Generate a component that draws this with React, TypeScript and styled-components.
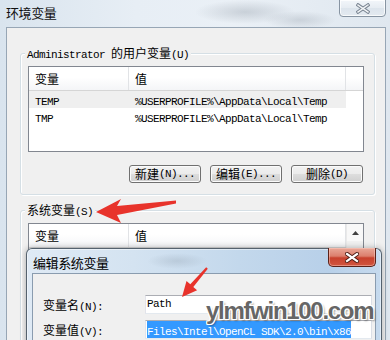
import React from "react";
import styled, { createGlobalStyle } from "styled-components";

const GlobalStyle = createGlobalStyle`
  *, *::before, *::after { box-sizing: border-box; }
  html, body { margin: 0; padding: 0; }
  body {
    width: 390px;
    height: 340px;
    overflow: hidden;
    font-family: "Noto Sans CJK SC", "Noto Sans", sans-serif;
    font-size: 12px;
    color: #000;
    background: #f0f0f0;
  }
`;

const Screen = styled.div`
  position: relative;
  width: 390px;
  height: 340px;
  overflow: hidden;
  display: flex;
  flex-direction: column;
  background:
    radial-gradient(ellipse 50px 12px at 245px 12px, rgba(140, 150, 162, 0.35), transparent),
    radial-gradient(ellipse 36px 9px at 300px 20px, rgba(140, 150, 162, 0.3), transparent),
    linear-gradient(90deg, #d9e4ee 0%, #e7eef5 35%, #eaf0f6 60%, #dfe7ef 100%);
`;

const TitleBar = styled.div`
  height: 27px;
  flex: none;
  display: flex;
  justify-content: space-between;
  align-items: flex-start;
  padding: 0 4px 0 6px;
`;

const WindowTitle = styled.div`
  margin-top: 5px;
  font-size: 13px;
  line-height: 15px;
  letter-spacing: -0.4px;
  color: #111;
`;

const CaptionClose = styled.div`
  width: 47px;
  height: 18px;
  margin-top: -1px;
  border: 1px solid #8794a2;
  border-radius: 0 0 4px 4px;
  background: linear-gradient(#f2f6fa 0%, #e6ecf2 50%, #dce4ec 51%, #e4eaf0 100%);
  box-shadow: inset 0 0 0 1px rgba(255, 255, 255, 0.75);
  display: flex;
  align-items: center;
  justify-content: center;
`;

const Client = styled.div`
  flex: 1;
  margin: 0 4px 0 6px;
  border: 1px solid #97a6b5;
  border-bottom: none;
  background: #f0f0f0;
  padding: 0 10px 0 13px;
  display: flex;
  flex-direction: column;
`;

const Group = styled.div<{ $top: number }>`
  margin-top: ${(p) => p.$top}px;
  flex: none;
  border: 1px solid #d5dfe5;
  border-radius: 3px;
  box-shadow: inset 1px 1px 0 #fff, 1px 1px 0 #fff;
  padding: 0 10px 11px 7px;
  display: flex;
  flex-direction: column;
`;

const Legend = styled.div`
  align-self: flex-start;
  margin: -8px 0 0 -3px;
  padding: 0 2px;
  height: 14px;
  line-height: 14px;
  background: #f0f0f0;
  white-space: nowrap;
`;

const M = styled.span`
  font-family: "Liberation Mono", "DejaVu Sans Mono", monospace;
  font-size: 11px;
  letter-spacing: -0.6px;
`;

const ListView = styled.div<{ $h: number }>`
  margin-top: 6px;
  height: ${(p) => p.$h}px;
  flex: none;
  border: 1px solid #828790;
  background: #fff;
  display: flex;
  overflow: hidden;
`;

const ListMain = styled.div`
  flex: 1;
  display: flex;
  flex-direction: column;
`;

const Header = styled.div`
  height: 24px;
  flex: none;
  display: flex;
  background: linear-gradient(#ffffff 0%, #ffffff 45%, #f4f5f7 100%);
  border-bottom: 1px solid #d5d5d5;
`;

const HeaderCell = styled.div<{ $w: number }>`
  width: ${(p) => p.$w}px;
  flex: none;
  border-right: 1px solid #e1e3e6;
  padding-left: 6px;
  line-height: 24px;
  white-space: nowrap;
`;

const HeaderFill = styled.div`
  flex: 1;
`;

const Row = styled.div<{ $hot?: boolean }>`
  display: flex;
  width: 317px;
  height: 17px;
  line-height: 17px;
  background: ${(p) => (p.$hot ? "#efefef" : "transparent")};
`;

const Cell = styled.div<{ $w: number }>`
  width: ${(p) => p.$w}px;
  flex: none;
  padding-left: 6px;
  white-space: nowrap;
  overflow: hidden;
`;

const ScrollTrack = styled.div`
  width: 17px;
  flex: none;
  background: #f1f1f1;
  border-left: 1px solid #e9e9e9;
  display: flex;
  flex-direction: column;
`;

const ScrollUp = styled.div`
  height: 17px;
  background: #f8f8f8;
  display: flex;
  align-items: center;
  justify-content: center;
`;

const ButtonRow = styled.div`
  margin-top: 13px;
  margin-right: 1px;
  display: flex;
  justify-content: flex-end;
  gap: 9px;
`;

const Button = styled.div`
  width: 72px;
  height: 18px;
  border: 1px solid #707070;
  border-radius: 3px;
  background: linear-gradient(#f2f2f2 0%, #ebebeb 50%, #dddddd 51%, #cfcfcf 100%);
  box-shadow: inset 0 0 0 1px #fbfbfb;
  display: flex;
  align-items: center;
  justify-content: center;
  line-height: 16px;
  white-space: nowrap;
`;

const Dialog = styled.div`
  position: absolute;
  left: 26px;
  top: 248px;
  width: 356px;
  height: 100px;
  border: 1px solid #55626e;
  border-bottom: none;
  border-radius: 6px 6px 0 0;
  background:
    radial-gradient(ellipse 30px 8px at 150px 12px, rgba(150, 165, 180, 0.35), transparent),
    linear-gradient(90deg, #dfeaf5 0%, #d4e3f1 30%, #c3d8ec 60%, #b8d0e9 85%, #c6daee 100%);
  box-shadow: 0 0 6px rgba(0, 0, 0, 0.3), inset 0 0 0 1px rgba(255, 255, 255, 0.45);
  padding: 0 5px;
  display: flex;
  flex-direction: column;
`;

const DialogTitleBar = styled.div`
  height: 24px;
  flex: none;
  display: flex;
  justify-content: space-between;
  align-items: flex-start;
`;

const DialogTitle = styled.div`
  margin: 7px 0 0 1px;
  font-size: 13px;
  line-height: 14px;
  letter-spacing: -0.4px;
`;

const DialogClose = styled.div`
  width: 48px;
  height: 19px;
  margin-top: -1px;
  border: 1px solid #5b2119;
  border-top: none;
  border-radius: 0 0 5px 5px;
  background: linear-gradient(#e9a898 0%, #dc7f6d 45%, #c8412d 55%, #d1553f 100%);
  box-shadow: inset 0 0 0 1px rgba(255, 210, 200, 0.45);
  display: flex;
  align-items: center;
  justify-content: center;
`;

const DialogBody = styled.div`
  flex: 1;
  background: #f0f0f0;
  border: 1px solid #8a9caf;
  border-bottom: none;
  padding: 21px 0 0 10px;
  display: flex;
  flex-direction: column;
  gap: 6px;
`;

const FormRow = styled.div`
  display: flex;
  align-items: center;
  height: 19px;
`;

const FieldLabel = styled.div`
  width: 102px;
  flex: none;
  white-space: nowrap;
`;

const TextBox = styled.div`
  flex: 1;
  height: 19px;
  margin-right: 3px;
  border: 1px solid;
  border-color: #abadb3 #dbdfe6 #e3e9ef #e2e3ea;
  background: #fff;
  padding: 0 1px;
  overflow: hidden;
  white-space: nowrap;
  display: flex;
  align-items: center;
  line-height: 17px;
`;

const Selected = styled.span`
  background: #3399ff;
  color: #fff;
  height: 17px;
  line-height: 17px;
`;

const Overlay = styled.svg`
  position: absolute;
  left: 0;
  top: 0;
  pointer-events: none;
`;

const Watermark = styled.div`
  position: absolute;
  left: 206px;
  top: 299px;
  font-family: "Liberation Sans", Arial, sans-serif;
  font-weight: 700;
  font-size: 24px;
  line-height: 24px;
  letter-spacing: -1.3px;
  color: #666;
  white-space: nowrap;
  text-shadow:
    1px 0 0 #fff, -1px 0 0 #fff, 0 1px 0 #fff, 0 -1px 0 #fff,
    1px 1px 0 #fff, -1px -1px 0 #fff, 1px -1px 0 #fff, -1px 1px 0 #fff,
    2px 2px 2px rgba(0, 0, 0, 0.35);
  pointer-events: none;
`;

const HollowX: React.FC<{ outer: string; inner: string; w: number; h: number; ow: number; iw: number }> = ({
  outer,
  inner,
  w,
  h,
  ow,
  iw,
}) => (
  <svg width={w + 4} height={h + 4} viewBox={`-2 -2 ${w + 4} ${h + 4}`}>
    <g strokeLinecap="square">
      <line x1={0} y1={0} x2={w} y2={h} stroke={outer} strokeWidth={ow} />
      <line x1={w} y1={0} x2={0} y2={h} stroke={outer} strokeWidth={ow} />
      <line x1={0} y1={0} x2={w} y2={h} stroke={inner} strokeWidth={iw} />
      <line x1={w} y1={0} x2={0} y2={h} stroke={inner} strokeWidth={iw} />
    </g>
  </svg>
);

const UpArrow = () => (
  <svg width="7" height="4" viewBox="0 0 7 4">
    <polygon points="3.5,0 7,4 0,4" fill="#404040" />
  </svg>
);

export default function App() {
  return (
    <>
      <GlobalStyle />
      <Screen>
        <TitleBar>
          <WindowTitle>环境变量</WindowTitle>
          <CaptionClose>
            <HollowX outer="#7b8693" inner="#f4f6f8" w={10} h={7} ow={3.4} iw={1.4} />
          </CaptionClose>
        </TitleBar>
        <Client>
          <Group $top={25}>
            <Legend>
              <M>Administrator </M>的用户变量<M>(U)</M>
            </Legend>
            <ListView $h={86}>
              <ListMain>
                <Header>
                  <HeaderCell $w={100}>变量</HeaderCell>
                  <HeaderCell $w={217}>值</HeaderCell>
                  <HeaderFill />
                </Header>
                <Row $hot>
                  <Cell $w={100}>
                    <M>TEMP</M>
                  </Cell>
                  <Cell $w={217}>
                    <M>%USERPROFILE%\AppData\Local\Temp</M>
                  </Cell>
                </Row>
                <Row>
                  <Cell $w={100}>
                    <M>TMP</M>
                  </Cell>
                  <Cell $w={217}>
                    <M>%USERPROFILE%\AppData\Local\Temp</M>
                  </Cell>
                </Row>
              </ListMain>
            </ListView>
            <ButtonRow>
              <Button>
                新建<M>(N)...</M>
              </Button>
              <Button>
                编辑<M>(E)...</M>
              </Button>
              <Button>
                删除<M>(D)</M>
              </Button>
            </ButtonRow>
          </Group>
          <Group $top={15}>
            <Legend>
              系统变量<M>(S)</M>
            </Legend>
            <ListView $h={120}>
              <ListMain>
                <Header>
                  <HeaderCell $w={100}>变量</HeaderCell>
                  <HeaderCell $w={217}>值</HeaderCell>
                </Header>
              </ListMain>
              <ScrollTrack>
                <ScrollUp>
                  <UpArrow />
                </ScrollUp>
              </ScrollTrack>
            </ListView>
          </Group>
        </Client>

        <Dialog>
          <DialogTitleBar>
            <DialogTitle>编辑系统变量</DialogTitle>
            <DialogClose>
              <HollowX outer="#4a1a12" inner="#ffffff" w={10} h={7} ow={4} iw={2.2} />
            </DialogClose>
          </DialogTitleBar>
          <DialogBody>
            <FormRow>
              <FieldLabel>
                变量名<M>(N):</M>
              </FieldLabel>
              <TextBox>
                <M>Path</M>
              </TextBox>
            </FormRow>
            <FormRow>
              <FieldLabel>
                变量值<M>(V):</M>
              </FieldLabel>
              <TextBox>
                <Selected>
                  <M>{" Files\\Intel\\OpenCL SDK\\2.0\\bin\\x86"}</M>
                </Selected>
              </TextBox>
            </FormRow>
          </DialogBody>
        </Dialog>

        <Overlay width="390" height="340" viewBox="0 0 390 340">
          <polygon
            points="96,212 121,199 117,206 176,200.5 176,203.5 117,215 121,223"
            fill="#e8332b"
          />
          <polygon
            points="182,297 186.5,281 190.3,284.3 206.2,267.3 207.8,268.7 193.3,286.9 197.1,290.2"
            fill="#e8332b"
          />
        </Overlay>
        <Watermark>ylmfwin100.com</Watermark>
      </Screen>
    </>
  );
}
